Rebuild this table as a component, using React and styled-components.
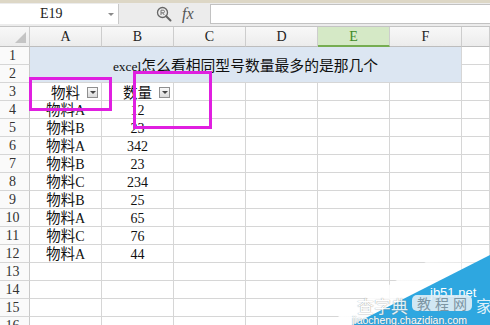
import React from "react";
import styled, { createGlobalStyle } from "styled-components";

const LATIN = '"Liberation Serif", "DejaVu Serif", serif';

const Global = createGlobalStyle`
  html, body { margin: 0; padding: 0; background: #fff; }
  body { font-family: "Noto Sans CJK SC", "Liberation Sans", sans-serif; }
`;

const Screen = styled.div`
  position: relative;
  width: 490px;
  height: 325px;
  overflow: hidden;
  background: #fff;
`;

const FormulaBar = styled.div`
  height: 27px;
  box-sizing: border-box;
  display: flex;
  align-items: center;
  background: #ececec;
  border-top: 3px solid #ddd7c6;
  border-bottom: 1px solid #c4c4c4;
  padding-bottom: 1px;
`;

const NameBox = styled.div`
  width: 119px;
  height: 20px;
  box-sizing: border-box;
  display: flex;
  align-items: center;
  background: #fff;
  border-right: 1px solid #c9c9c9;
  padding-left: 40px;
  font-family: ${LATIN};
  font-size: 14px;
  color: #222;
  span { flex: 1; }
  &::after {
    content: "";
    margin-right: 4px;
    border-left: 3px solid transparent;
    border-right: 3px solid transparent;
    border-top: 3px solid #8a8a8a;
  }
`;

const Tools = styled.div`
  width: 91px;
  display: flex;
  align-items: center;
  padding-left: 37px;
  box-sizing: border-box;
  gap: 10px;
`;

const Fx = styled.span`
  font-family: "Liberation Serif", serif;
  font-style: italic;
  font-size: 16px;
  color: #555;
`;

const FormulaInput = styled.div`
  flex: 1;
  height: 20px;
  background: #fff;
  border: 1px solid #c2c2c2;
  border-right: none;
  box-sizing: border-box;
`;

const Sheet = styled.div`
  display: grid;
  grid-template-columns: 30px repeat(6, 72px) 1fr;
  grid-template-rows: 20px;
  grid-auto-rows: 18px;
`;

const Cell = styled.div`
  position: relative;
  box-sizing: border-box;
  border-right: 1px solid #d6d6d6;
  border-bottom: 1px solid #d6d6d6;
  display: flex;
  align-items: center;
  justify-content: center;
  font-family: "Noto Sans CJK SC", sans-serif;
  font-size: 14.5px;
  line-height: 1;
  color: #111;
  white-space: nowrap;
  padding-top: 1px;
`;

const ColHead = styled(Cell)`
  background: ${(p) => (p.$active ? "#d5e9c6" : "linear-gradient(#f8f8f8, #ececec)")};
  border-right-color: #cdcdcd;
  border-bottom: ${(p) => (p.$active ? "2px solid #76ad51" : "1px solid #bdbdbd")};
  font-family: ${LATIN};
  font-size: 14px;
  color: ${(p) => (p.$active ? "#3f8a25" : "#222")};
`;

const Corner = styled(ColHead)`
  justify-content: flex-end;
  align-items: flex-end;
  padding: 0 3px 3px 0;
  &::after {
    content: "";
    border-left: 11px solid transparent;
    border-bottom: 11px solid #c4c4c4;
  }
`;

const RowHead = styled(Cell)`
  background: #fafafa;
  border-right-color: #c9c9c9;
  padding-right: 4px;
  font-family: ${LATIN};
  font-size: 14px;
  color: #333;
`;

const Title = styled(Cell)`
  grid-column: 2 / 8;
  grid-row: 2 / 4;
  background: #dce6f2;
  padding-top: 2px;
  font-size: 14.8px;
`;

const FilterCell = styled(Cell)`
  justify-content: flex-start;
  padding-left: 14px;
  span.label { flex: 1; text-align: center; }
`;

const FilterBtn = styled.span`
  width: 11px;
  height: 11px;
  margin-right: ${(p) => p.$gap}px;
  box-sizing: border-box;
  border: 1px solid #8f8f8f;
  background: linear-gradient(#fafafa, #d9d9d9);
  display: flex;
  align-items: center;
  justify-content: center;
  &::after {
    content: "";
    border-left: 3px solid transparent;
    border-right: 3px solid transparent;
    border-top: 3px solid #444;
  }
`;

const Lat = styled.span`
  font-family: ${LATIN};
  font-size: ${(p) => p.$size || 14}px;
`;

const Marker = styled.div`
  position: absolute;
  left: ${(p) => p.$x}px;
  top: ${(p) => p.$y}px;
  width: ${(p) => p.$w}px;
  height: ${(p) => p.$h}px;
  box-sizing: border-box;
  border: 3px solid #e01fe0;
`;

const Watermark = styled.div`
  position: absolute;
  left: 320px;
  top: 235px;
  width: 170px;
  height: 90px;
  font-family: "Liberation Sans", sans-serif;
  color: #fff;
`;

const WmText = styled.span`
  position: absolute;
  left: ${(p) => p.$x}px;
  top: ${(p) => p.$y}px;
  font-size: ${(p) => p.$size}px;
  font-family: ${(p) => (p.$cjk ? '"Noto Sans CJK SC", sans-serif' : '"Liberation Sans", sans-serif')};
  color: #fff;
  opacity: ${(p) => p.$op || 1};
  text-shadow: ${(p) => p.$shadow || "none"};
  white-space: nowrap;
  line-height: 1;
`;

const Badge = styled.span`
  position: absolute;
  left: 92px;
  top: 60px;
  width: 60px;
  height: 16px;
  border-radius: 5px;
  background: rgba(226, 238, 245, 0.9);
  color: #7c95a3;
  font-family: "Noto Sans CJK SC", sans-serif;
  font-size: 14px;
  line-height: 16px;
  text-align: center;
  letter-spacing: 4px;
  text-indent: 4px;
`;

const Mixed = ({ text }) => (
  <span>
    {text.split(/([A-Za-z0-9.]+)/).map((part, i) =>
      /[A-Za-z0-9]/.test(part) ? <Lat key={i}>{part}</Lat> : part
    )}
  </span>
);

const cols = ["A", "B", "C", "D", "E", "F", ""];

const data = [
  ["物料A", "12"],
  ["物料B", "23"],
  ["物料A", "342"],
  ["物料B", "23"],
  ["物料C", "234"],
  ["物料B", "25"],
  ["物料A", "65"],
  ["物料C", "76"],
  ["物料A", "44"],
];

const Empty = ({ n }) => Array.from({ length: n }, (_, i) => <Cell key={"e" + i} />);

export default function App() {
  return (
    <Screen>
      <Global />
      <FormulaBar>
        <NameBox>
          <span>E19</span>
        </NameBox>
        <Tools>
          <svg width="16" height="16" viewBox="0 0 16 16">
            <circle cx="6.5" cy="6.5" r="5" fill="none" stroke="#666" strokeWidth="1.3" />
            <path d="M10.2 10.2 L14.5 14.5" stroke="#666" strokeWidth="2" strokeLinecap="round" />
            <path d="M5 9 V4.2 H7.2 A1.3 1.3 0 0 1 7.2 6.8 H5 M6.6 6.8 L8.3 9" fill="none" stroke="#777" strokeWidth="1" />
          </svg>
          <Fx>fx</Fx>
        </Tools>
        <FormulaInput />
      </FormulaBar>

      <Sheet>
        <Corner />
        {cols.map((c, i) => (
          <ColHead key={i} $active={c === "E"}>{c}</ColHead>
        ))}

        <RowHead>1</RowHead>
        <Title>
          <span>
            <Lat $size={13.5}>excel</Lat>怎么看相同型号数量最多的是那几个
          </span>
        </Title>
        <Cell />
        <RowHead>2</RowHead>
        <Cell />

        <RowHead>3</RowHead>
        <FilterCell>
          <span className="label">物料</span>
          <FilterBtn $gap={3} />
        </FilterCell>
        <FilterCell>
          <span className="label">数量</span>
          <FilterBtn $gap={3} />
        </FilterCell>
        <Empty n={5} />

        {data.map(([name, qty], i) => (
          <React.Fragment key={i}>
            <RowHead>{i + 4}</RowHead>
            <Cell>
              <Mixed text={name} />
            </Cell>
            <Cell>
              <Mixed text={qty} />
            </Cell>
            <Empty n={5} />
          </React.Fragment>
        ))}

        {[13, 14, 15, 16].map((n) => (
          <React.Fragment key={n}>
            <RowHead>{n}</RowHead>
            <Empty n={7} />
          </React.Fragment>
        ))}
      </Sheet>

      <Marker $x={29} $y={77} $w={83} $h={34} />
      <Marker $x={133} $y={71} $w={79} $h={58} />

      <Watermark>
        <svg width="170" height="90" viewBox="0 0 170 90" style={{ position: "absolute", left: 0, top: 0 }}>
          <defs>
            <linearGradient id="fade" x1="0" y1="1" x2="1" y2="0">
              <stop offset="0" stopColor="#fff" stopOpacity="0.95" />
              <stop offset="0.6" stopColor="#fff" stopOpacity="0.8" />
              <stop offset="1" stopColor="#fff" stopOpacity="0" />
            </linearGradient>
          </defs>
          <polygon points="5,90 125,15 170,5 170,90" fill="url(#fade)" />
          <polygon points="32,90 170,20 170,90" fill="#2ea7e0" />
        </svg>
        <WmText $x={37} $y={62} $size={17} $cjk $op={0.85} $shadow="0 0 1px #666">
          查字典
        </WmText>
        <WmText $x={110} $y={51} $size={13}>jb51.net</WmText>
        <Badge>教程网</Badge>
        <WmText $x={156} $y={62} $size={16} $cjk $op={0.85}>家</WmText>
        <WmText $x={32} $y={80} $size={10.5} $shadow="0 0 1px #5a7a8a">
          jiaocheng.chazidian.com
        </WmText>
      </Watermark>
    </Screen>
  );
}
